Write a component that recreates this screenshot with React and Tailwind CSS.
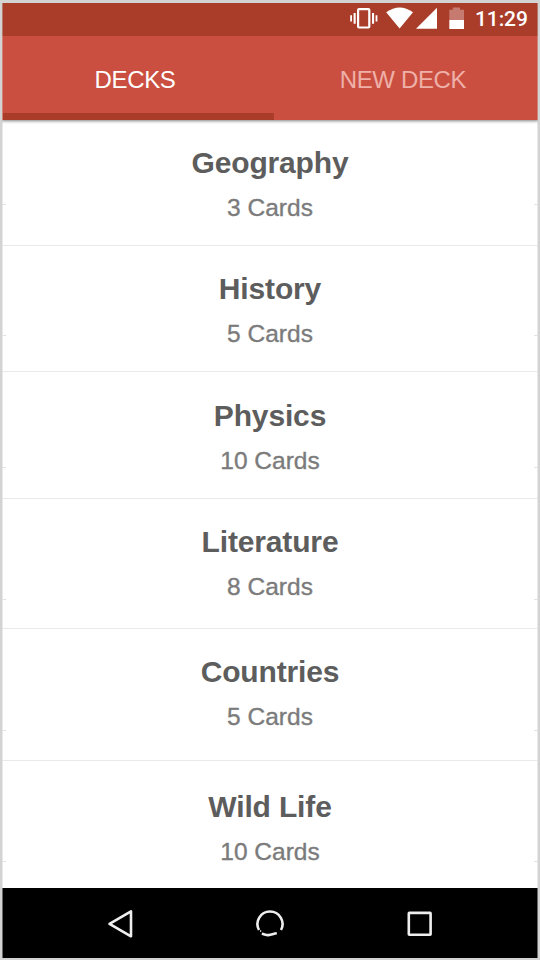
const decks = [
  { name: 'Geography', count: 3, row: 'h-[126px] pt-[25px] border-b' },
  { name: 'History', count: 5, row: 'h-[126px] pt-[25px] border-b' },
  { name: 'Physics', count: 10, row: 'h-[127px] pt-[26px] border-b' },
  { name: 'Literature', count: 8, row: 'h-[130px] pt-[25px] border-b' },
  { name: 'Countries', count: 5, row: 'h-[132px] pt-[25px] border-b' },
  { name: 'Wild Life', count: 10, row: 'h-[127px] pt-[28px]' },
];

const ticks = ['top-[204px]', 'top-[335px]', 'top-[467px]', 'top-[599px]', 'top-[730px]', 'top-[861px]'];

function StatusBar() {
  return (
    <div className="relative z-20 flex h-[33px] shrink-0 justify-end border-x border-[#b8776b] bg-[#a93d2a]">
      <svg width="130" height="33" viewBox="345 3 130 33" fill="white">
        <rect x="358.1" y="9.1" width="11.2" height="18.4" rx="1" fill="none" stroke="white" strokeWidth="2.2" />
        <path d="M350.2 15.2h1.8v6.4h-1.8zM353.6 13h2.1v10.8h-2.1zM372 13h2.1v10.8h-2.1zM375.6 15.2h1.8v6.4h-1.8z" />
        <path d="M386.2 12.3Q399.6 2.6 413 12.3L399.6 28.5Z" />
        <path d="M437 7.8V28.8H416Z" />
        <path d="M449.3 9.8h3.5V7.5h7.2v2.3h4V20h-14.7z" fill="#c77b70" />
        <path d="M449.3 20H464v9h-14.7z" />
      </svg>
      <span className="w-[62px] font-['Roboto',sans-serif] text-[21px] font-medium leading-[33px] tracking-[-0.1px] text-white">11:29</span>
    </div>
  );
}

function Tabs() {
  return (
    <div className="relative z-10 flex h-[84px] shrink-0 border-x border-[#d08378] bg-[#ca4f40] text-center text-[24px] leading-[87px] tracking-[-0.35px] shadow-[0_1px_3px_rgba(0,0,0,0.5)]">
      <div className="h-full w-[271px] border-b-[7px] border-[#a93d2a] pr-[7px] text-white">DECKS</div>
      <div className="flex-1 pr-[5px] text-[#eeb0a8]">NEW DECK</div>
    </div>
  );
}

function NavBar() {
  return (
    <div className="flex h-[70px] shrink-0 border-x border-[#6a6a6a] bg-black">
      <svg width="534" height="70" viewBox="3 888 534 70" fill="none" stroke="#eeeeee" strokeWidth="2.6" strokeLinejoin="round">
        <path d="M109.5 923.8L131 911.3V936.3Z" />
        <path d="M259 930A12.5 12.5 0 1 1 281 930" />
        <path d="M260.6 930.3v1.4" strokeWidth="1.2" />
        <path d="M261.8 933.8C264.5 934.2 266 935.3 268.5 935.1S273.5 933.8 276.8 933.3" />
        <rect x="408.8" y="912.9" width="21.8" height="21.8" rx="0.5" />
      </svg>
    </div>
  );
}

export default function App() {
  return (
    <div className="relative flex h-[960px] w-[540px] flex-col overflow-hidden border-x-2 border-b-2 border-t-[3px] border-[#d3d3d3] bg-white font-['Liberation_Sans',Arial,sans-serif]">
      <StatusBar />
      <Tabs />
      <main className="flex h-[768px] shrink-0 flex-col border-x border-[#e9e9e9]">
        {decks.map((deck) => (
          <section key={deck.name} className={`shrink-0 border-[#e9e9e9] text-center ${deck.row}`}>
            <h2 className="text-[30px] font-bold leading-[36px] tracking-[-0.15px] text-[#5d5d5d]">{deck.name}</h2>
            <p className="mt-[12px] text-[24.5px] leading-[30px] text-[#7b7b7b] [-webkit-text-stroke:0.35px_#7b7b7b]">{deck.count} Cards</p>
          </section>
        ))}
      </main>
      <NavBar />
      {ticks.map((top) => (
        <div key={top} className={`absolute inset-x-0 -mt-[3px] flex justify-between ${top}`}>
          <span className="h-px w-[4px] bg-[#e2e2e2]" />
          <span className="h-px w-[4px] bg-[#e2e2e2]" />
        </div>
      ))}
    </div>
  );
}
